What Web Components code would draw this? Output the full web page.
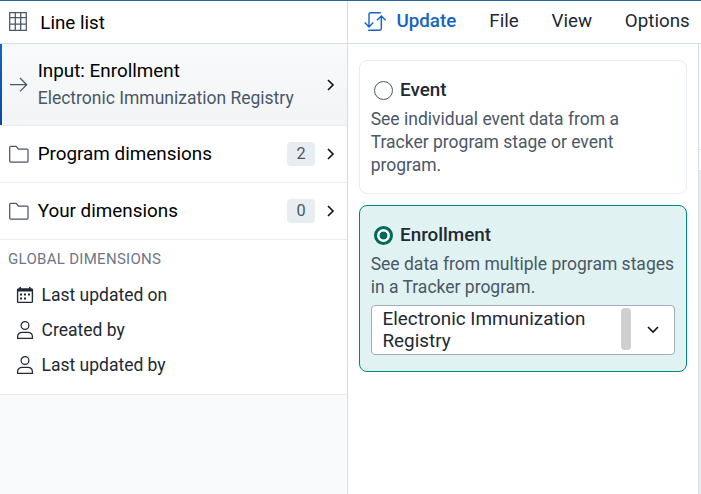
<!DOCTYPE html>
<html lang="en">
<head>
<meta charset="utf-8">
<title>Line list</title>
<style>
html, body { margin: 0; height: 100%; overflow: hidden; }
body { font-family: Roboto, "Liberation Sans", sans-serif; color: #212934; background: #fff; }
</style>
</head>
<body>
<line-list-app></line-list-app>
<script>
const define = (name, markup, setup) => {
  const template = document.createElement('template');
  template.innerHTML = markup;
  customElements.define(name, class extends HTMLElement {
    connectedCallback() {
      if (this.shadowRoot) return;
      this.attachShadow({ mode: 'open' }).append(template.content.cloneNode(true));
      if (setup) setup(this, this.shadowRoot);
    }
  });
};

const icons = {
  grid: [20, 21, '<path d="M1.7 1.7h16.6v17.6H1.7zM1.7 6.5h16.6M1.7 13h16.6M7.3 1.7v17.6M12.7 1.7v17.6" stroke="#4a5768" stroke-width="1.25"/>'],
  arrow: [20, 20, '<path d="M1 9.7h17M11 3l6.7 6.7-6.7 6.7" stroke="#4a5768" stroke-width="1.3"/>'],
  folder: [20, 20, '<path d="M.7 17V3.4c0-.7.4-1 1-1h5.5l2.2 2.6H18c.6 0 1 .4 1 1V17c0 .6-.4 1-1 1H1.7c-.6 0-1-.4-1-1z" stroke="#4a5768" stroke-width="1.25"/>'],
  right: [10, 14, '<path d="M2 2l5 5-5 5" stroke="#0d1117" stroke-width="1.6"/>'],
  down: [14, 10, '<path d="M2 2l5 5 5-5" stroke="#0d1117" stroke-width="1.6"/>'],
  calendar: [18, 19, '<path d="M2.6 4h12.8c.6 0 1 .4 1 1v11.4c0 .6-.4 1-1 1H2.6c-.6 0-1-.4-1-1V5c0-.6.4-1 1-1z" stroke="#212934" stroke-width="1.4"/><path d="M1.2 4h15.6v2.5H1.2zM3.4 2H5v3H3.4zM13 2h1.6v3H13z" fill="#212934"/><path d="M4 9.500h2M8 9.500h2M12 9.500h2M4 13.500h2M8 13.500h2" stroke="#212934" stroke-width="1.9"/>'],
  user: [18, 20, '<circle cx="9" cy="5.5" r="3.9" stroke="#212934" stroke-width="1.25"/><path d="M1.6 18.3v-1.6c0-2.7 2-4.3 4.7-4.3h5.4c2.7 0 4.7 1.6 4.7 4.3v1.6z" stroke="#212934" stroke-width="1.25"/>'],
  update: [22, 20, '<path d="M16.8 1.7H6.7c-1.1 0-1.7.6-1.7 1.7v12.5M.7 11.6L5 15.9l4.3-4.3M4.2 19.2h11.4c1.1 0 1.7-.6 1.7-1.7V5M13 9.300L17.300 5l4.300 4.300" stroke="#1565c0" stroke-width="1.4"/>']
};

define('ui-icon', `<style>:host{display:block;flex:none}svg{display:block}</style>`, (el, root) => {
  const [w, h, body] = icons[el.getAttribute('name')];
  root.innerHTML += `<svg width="${w}" height="${h}" viewBox="0 0 ${w} ${h}" fill="none">${body}</svg>`;
});

define('panel-header', `<style>
:host{display:flex;align-items:center;box-sizing:border-box;height:43px;padding:0 0 1px 8px;gap:12.3px;background:#fff;border-bottom:1px solid #d5dde5;font-size:18.75px;line-height:24px;color:#000}
span{padding-top:3px}
</style><ui-icon name="grid"></ui-icon><span><slot></slot></span>`);

define('nav-row', `<style>
:host{display:flex;align-items:center;box-sizing:border-box;height:57px;padding:0 11px 0 9px;background:#fff;border-bottom:1px solid #e8edf2;font-size:18.85px;line-height:24px;color:#000}
:host([selected]){height:82px;background:linear-gradient(#1565c0,#0d47a1) 0 0/2px 100% no-repeat,linear-gradient(#f8fafc,#f2f4f6)}
.text{flex:1;margin-left:8.7px}
::slotted([slot=sub]){display:block;font-size:17.5px;line-height:24px;margin-top:3px;color:#4a5768}
::slotted([slot=count]){box-sizing:border-box;width:28px;height:24px;border-radius:4px;background:#e8edf2;color:#4a5768;font-size:16.25px;line-height:24px;text-align:center;margin-right:11px}
</style><slot name="icon"></slot><div class="text"><slot></slot><slot name="sub"></slot></div><slot name="count"></slot><ui-icon name="right"></ui-icon>`);

define('dimension-item', `<style>
:host{display:flex;align-items:center;height:35px;padding-left:16px;gap:7.5px;font-size:17.5px;line-height:24px}
</style><slot name="icon"></slot><span><slot></slot></span>`);

define('dimension-group', `<style>
:host{display:block;box-sizing:border-box;height:155px;background:#fff;border-bottom:1px solid #e4e8ed}
h2{font-weight:400;font-size:15px;line-height:20px;color:#6c7787;letter-spacing:.3px;margin:0;padding:9px 8px 8px}
</style><h2></h2><slot></slot>`, (el, root) => root.querySelector('h2').textContent = el.getAttribute('heading'));

define('menu-bar', `<style>
:host{display:flex;align-items:center;box-sizing:border-box;height:43px;padding:0 0 2px 16px;border-bottom:1px solid #d5dde5;font-size:18.75px;line-height:24px;color:#212934;white-space:nowrap}
ui-icon{margin:0 10.5px 0 0}
b{font-weight:500;color:#1565c0}
b,slot{margin-top:-1px}
slot{display:flex;gap:32.8px;margin-left:33px}
</style><ui-icon name="update"></ui-icon><b>Update</b><slot></slot>`);

define('radio-card', `<style>
:host{display:block;box-sizing:border-box;height:134px;padding:16px 11px 0;border:1px solid #e8edf2;border-radius:8px}
:host([checked]){height:167px;background:#e0f2f1;border-color:#00897b}
.title{display:flex;align-items:center;gap:7px;height:26px;padding-left:3px;font-size:18.85px;font-weight:500}
i{box-sizing:border-box;width:19px;height:19px;border:1.25px solid #4a5768;border-radius:50%;background:#fff;margin-top:1px}
:host([checked]) i{border:3px solid #00695c;background:radial-gradient(circle,#00695c 3.6px,#fff 4.3px)}
p{font-size:17.5px;line-height:23px;color:#4a5768;margin:5px 0 0 -.3px}
:host([checked]) p{margin-right:-4px}
</style><div class="title"><i></i><span></span></div><p></p><slot></slot>`, (el, root) => {
  root.querySelector('span').textContent = el.getAttribute('label');
  root.querySelector('p').textContent = el.getAttribute('description');
});

define('program-select', `<style>
:host{display:flex;box-sizing:border-box;width:304px;height:50px;margin-top:6px;border:1px solid #a0adba;border-radius:4px;background:#fff;font-size:18.85px;line-height:22px;color:#212934}
.value{width:238px;padding:2px 0 0 10.5px;box-sizing:border-box}
.thumb{width:10px;height:42px;margin:2px 15px 0 11px;border-radius:4px;background:#cfcfcf}
ui-icon{align-self:center}
</style><div class="value"><slot></slot></div><div class="thumb"></div><ui-icon name="down"></ui-icon>`);

define('line-list-app', `<style>
:host{display:grid;grid-template-columns:347px 1fr;box-sizing:border-box;width:701px;height:494px;border-top:1px solid #2c6693}
aside{background:#f8fafc}
main{border-left:1px solid #d5dde5;display:grid;grid-template-columns:350px 1fr;grid-template-rows:43px 1fr;overflow:hidden}
menu-bar{grid-column:1/3}
.cards{display:flex;flex-direction:column;gap:11px;padding:16px 11px 0}
.canvas{border-left:1px solid #d5dde5;display:flex;flex-direction:column}
.canvas div{height:105px;border-bottom:1px solid #e4e9ee}
.canvas div+div{height:20px}
.canvas section{flex:1;background:#e8edf2}
</style>
<aside>
<panel-header>Line list</panel-header>
<nav-row selected><ui-icon slot="icon" name="arrow"></ui-icon>Input: Enrollment<span slot="sub">Electronic Immunization Registry</span></nav-row>
<nav-row><ui-icon slot="icon" name="folder"></ui-icon>Program dimensions<span slot="count">2</span></nav-row>
<nav-row><ui-icon slot="icon" name="folder"></ui-icon>Your dimensions<span slot="count">0</span></nav-row>
<dimension-group heading="GLOBAL DIMENSIONS">
<dimension-item><ui-icon slot="icon" name="calendar"></ui-icon>Last updated on</dimension-item>
<dimension-item><ui-icon slot="icon" name="user"></ui-icon>Created by</dimension-item>
<dimension-item><ui-icon slot="icon" name="user"></ui-icon>Last updated by</dimension-item>
</dimension-group>
</aside>
<main>
<menu-bar><span>File</span><span>View</span><span>Options</span></menu-bar>
<div class="cards">
<radio-card label="Event" description="See individual event data from a Tracker program stage or event program."></radio-card>
<radio-card checked label="Enrollment" description="See data from multiple program stages in a Tracker program."><program-select>Electronic Immunization Registry</program-select></radio-card>
</div>
<div class="canvas"><div></div><div></div><section></section></div>
</main>`);
</script>
</body>
</html>
